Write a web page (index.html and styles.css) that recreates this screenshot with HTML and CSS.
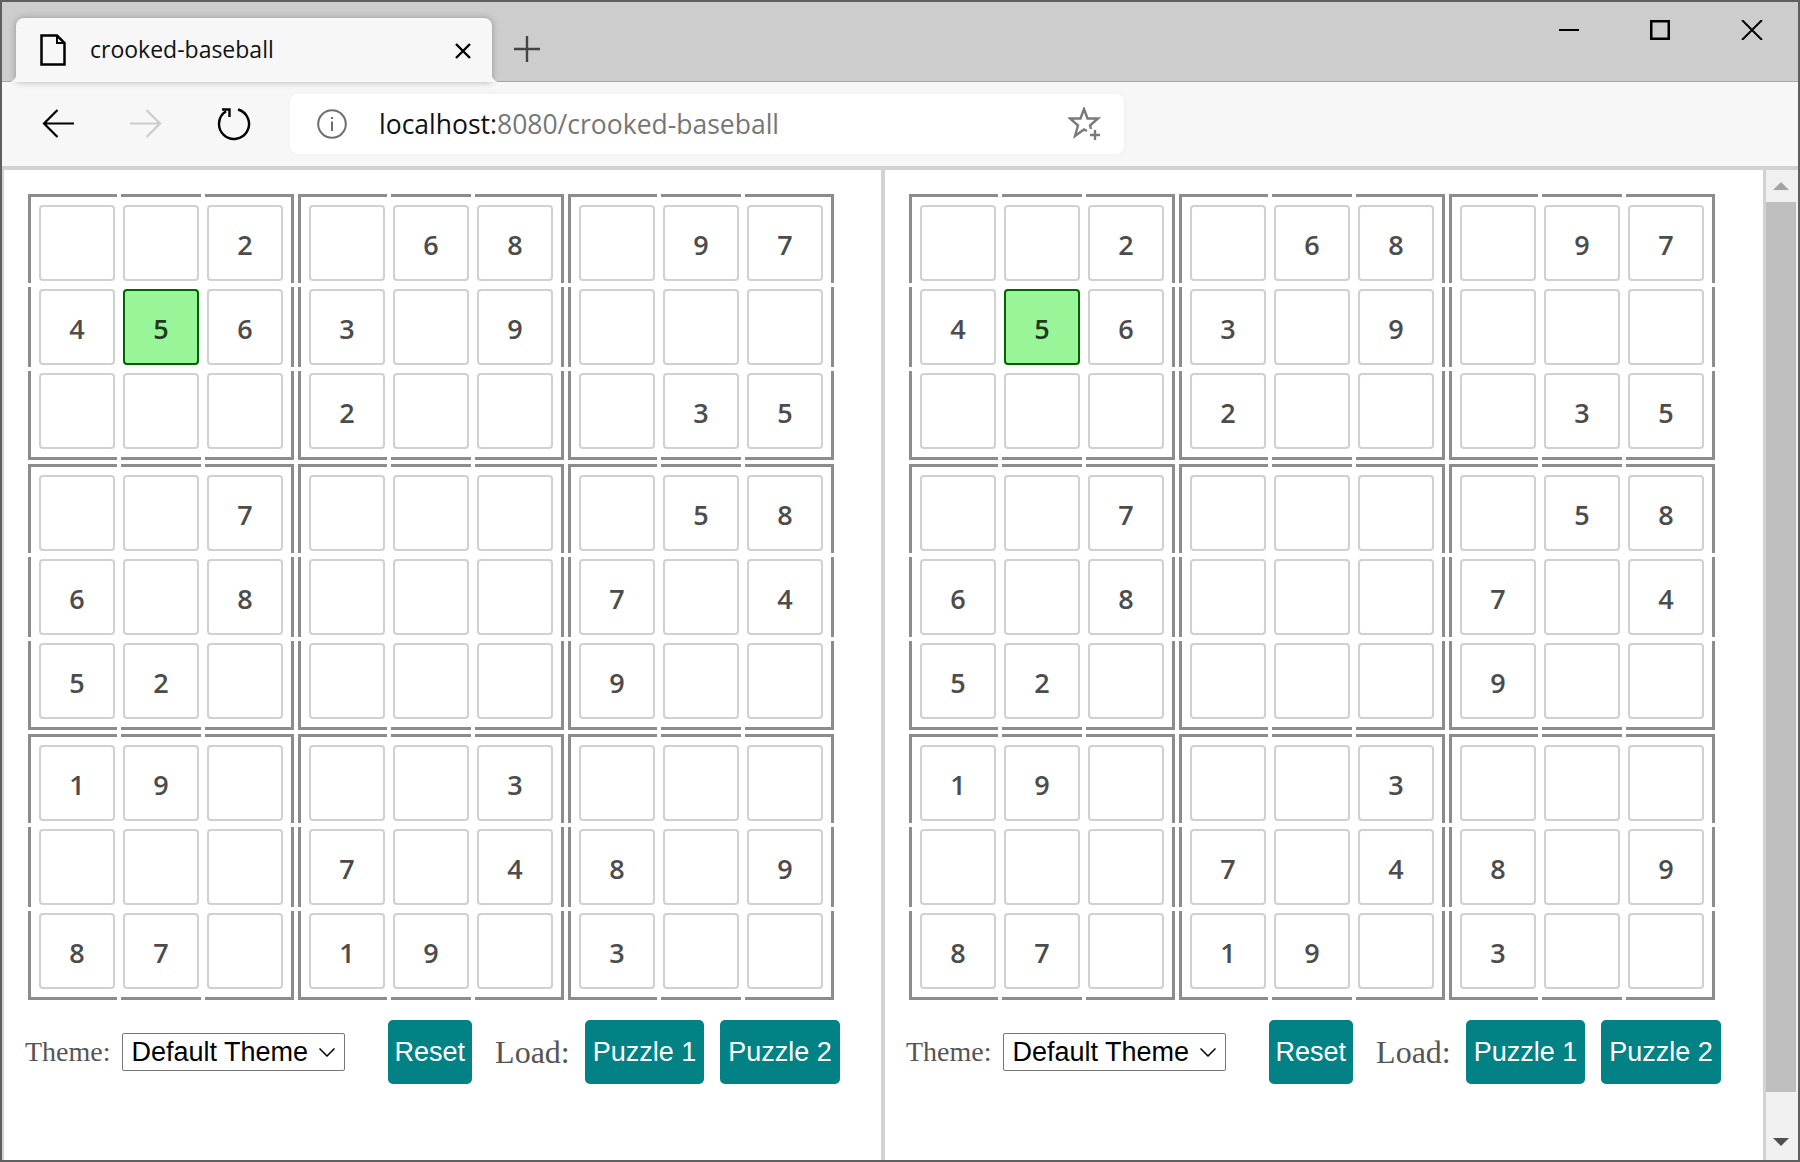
FILE: index.html
```html
<!DOCTYPE html>
<html lang="en">
<head>
  <meta charset="UTF-8">
  <title>crooked-baseball</title>
  <link rel="stylesheet" href="styles.css">
</head>
<body>
  <div class="window">
    <div class="tabstrip">
      <div class="tab">
        <svg class="doc-icon" width="26" height="32" viewBox="0 0 26 32" fill="none" stroke="#000" stroke-width="2.500">
          <path d="M1.5 1.5H17L24.5 9V30.5H1.5Z"/>
          <path d="M17 1.5V9H24.5" stroke-width="2"/>
        </svg>
        <span class="tab-title">crooked-baseball</span>
        <svg class="tab-close" width="16" height="16" viewBox="0 0 16 16" stroke="#000" stroke-width="2.4">
          <path d="M1 1L15 15M15 1L1 15"/>
        </svg>
      </div>
      <svg class="new-tab" width="26" height="26" viewBox="0 0 26 26" stroke="#444" stroke-width="2.4">
        <path d="M13 0V26M0 13H26"/>
      </svg>
      <div class="window-controls">
        <svg width="20" height="20" viewBox="0 0 20 20" stroke="#000" stroke-width="2"><path d="M0 10H20"/></svg>
        <svg width="20" height="20" viewBox="0 0 20 20" fill="none" stroke="#000" stroke-width="2.500"><path d="M1.250 1.250H18.750V18.750H1.250Z"/></svg>
        <svg width="22" height="20" viewBox="0 0 22 20" stroke="#000" stroke-width="2"><path d="M1 0L21 20M21 0L1 20"/></svg>
      </div>
    </div>

    <div class="toolbar">
      <svg class="nav-back" width="32" height="30" viewBox="0 0 32 30" fill="none" stroke="#000" stroke-width="2.2">
        <path d="M32 14.5H2M15.5 1L2 14.5L15.5 28"/>
      </svg>
      <svg class="nav-forward" width="32" height="30" viewBox="0 0 32 30" fill="none" stroke="#ccc" stroke-width="2.2">
        <path d="M0 14.5H30M16.500 1L30 14.5L16.500 28"/>
      </svg>
      <svg class="nav-reload" width="34" height="34" viewBox="0 0 34 34" fill="none" stroke="#000" stroke-width="2.4">
        <path d="M21 2.500A15 15 0 1 1 9 4.300"/>
        <path d="M5 2.500H12.500V10"/>
      </svg>
      <div class="urlbar">
        <svg class="info-icon" width="30" height="30" viewBox="0 0 30 30" fill="none" stroke="#6e6e6e" stroke-width="2">
          <circle cx="15" cy="15" r="13.800"/>
          <path d="M15 12.500V22M15 8V10"/>
        </svg>
        <span class="url"><span class="url-host">localhost:</span>8080/crooked-baseball</span>
        <svg class="star-icon" width="34" height="34" viewBox="0 0 34 34" fill="none" stroke="#7a7a7a" stroke-width="2.400">
          <path d="M23 22L22 18.500L30 11.500H19.500L16 2L12.500 11.500H2L10 18.500L7 29L16 22.500L19 24"/>
          <path d="M27 23V33M22 28H32"/>
        </svg>
      </div>
    </div>

    <div class="content">
      <div class="pane">
        <div class="board"></div>
        <div class="controls">
          <span class="theme-label">Theme:</span>
          <div class="select-wrap">
            <select class="theme-select"><option>Default Theme</option></select>
            <svg class="select-arrow" width="16" height="9" viewBox="0 0 16 9" fill="none" stroke="#000" stroke-width="1.500"><path d="M0.500 0.500L8 8L15.500 0.500"/></svg>
          </div>
          <button class="btn btn-reset">Reset</button>
          <span class="load-label">Load:</span>
          <button class="btn btn-puzzle">Puzzle 1</button>
          <button class="btn btn-puzzle btn-last">Puzzle 2</button>
        </div>
      </div>
      <div class="divider"></div>
      <div class="pane">
        <div class="board"></div>
        <div class="controls">
          <span class="theme-label">Theme:</span>
          <div class="select-wrap">
            <select class="theme-select"><option>Default Theme</option></select>
            <svg class="select-arrow" width="16" height="9" viewBox="0 0 16 9" fill="none" stroke="#000" stroke-width="1.500"><path d="M0.500 0.500L8 8L15.500 0.500"/></svg>
          </div>
          <button class="btn btn-reset">Reset</button>
          <span class="load-label">Load:</span>
          <button class="btn btn-puzzle">Puzzle 1</button>
          <button class="btn btn-puzzle btn-last">Puzzle 2</button>
        </div>
      </div>
      <div class="scrollbar">
        <div class="scroll-up"><span class="arrow-up"></span></div>
        <div class="scroll-thumb"></div>
        <div class="scroll-down"><span class="arrow-down"></span></div>
      </div>
    </div>
  </div>

  <script>
    // one string per row, dots are empty cells
    const puzzle = [
      "..2.68.97",
      "4563.9...",
      "...2...35",
      "..7....58",
      "6.8...7.4",
      "52....9..",
      "19...3...",
      "...7.48.9",
      "87.19.3.."
    ];

    document.querySelectorAll(".board").forEach(board => {
      for (let boxRow = 0; boxRow < 3; boxRow++) {
        for (let boxCol = 0; boxCol < 3; boxCol++) {
          const box = document.createElement("div");
          box.className = "box";
          for (let r = boxRow * 3; r < boxRow * 3 + 3; r++) {
            for (let c = boxCol * 3; c < boxCol * 3 + 3; c++) {
              const cell = document.createElement("div");
              cell.className = "cell";
              if (r === 1 && c === 1) cell.classList.add("active");
              if (puzzle[r][c] !== ".") cell.textContent = puzzle[r][c];
              box.appendChild(cell);
            }
          }
          board.appendChild(box);
        }
      }
    });
  </script>
</body>
</html>
```

FILE: styles.css
```css
* {
  box-sizing: border-box;
}

body {
  margin: 0;
  background-color: #5f5f5f;
}

svg {
  display: block;
  flex: none;
}

.window {
  width: 1800px;
  height: 1162px;
  border: 2px solid #5f5f5f;
  display: flex;
  flex-direction: column;
  overflow: hidden;
}

/* tab strip */
.tabstrip {
  height: 80px;
  flex: none;
  display: flex;
  background-color: #cdcdcd;
  border-bottom: 1px solid #a8a8a8;
  padding-left: 14px;
}

.tab {
  position: relative;
  width: 476px;
  height: 64px;
  margin-top: 16px;
  padding: 0 21px 0 24px;
  display: flex;
  align-items: center;
  background-color: #f7f7f7;
  border-radius: 8px 8px 0 0;
  box-shadow: 0 0 7px rgba(0, 0, 0, 0.28);
}

.tab::before,
.tab::after {
  content: "";
  position: absolute;
  bottom: 0;
  width: 8px;
  height: 8px;
}

.tab::before {
  left: -8px;
  background: radial-gradient(circle at 0 0, transparent 8px, #f7f7f7 8.500px);
}

.tab::after {
  right: -8px;
  background: radial-gradient(circle at 100% 0, transparent 8px, #f7f7f7 8.500px);
}

.tab-title {
  margin-left: 24px;
  margin-top: -2px;
  font-family: "Open Sans", sans-serif;
  font-size: 23px;
  color: #111;
}

.tab-close {
  margin-left: auto;
  margin-top: 2px;
}

.new-tab {
  margin: 34px 0 0 22px;
}

.window-controls {
  margin: 18px 35px 0 auto;
  display: flex;
  gap: 71px;
}

/* address bar */
.toolbar {
  height: 88px;
  flex: none;
  display: flex;
  align-items: center;
  padding-left: 40px;
  background-color: #f7f7f7;
  border-bottom: 4px solid #d2d2d2;
}

.nav-forward {
  margin-left: 56px;
}

.nav-reload {
  margin-left: 55px;
}

.urlbar {
  width: 834px;
  height: 60px;
  margin-left: 39px;
  padding: 0 22px 0 27px;
  display: flex;
  align-items: center;
  background-color: #fff;
  border-radius: 8px;
  box-shadow: 0 0 6px rgba(0, 0, 0, 0.04);
}

.url {
  margin-left: 32px;
  font-family: "Open Sans", sans-serif;
  font-size: 26.500px;
  color: #767676;
}

.url-host {
  color: #111;
}

.star-icon {
  margin-left: auto;
}

/* panes */
.content {
  flex: 1;
  display: flex;
  min-height: 0;
  background-color: #fff;
  border-left: 2px solid #d2d2d2;
}

.pane {
  width: 877px;
  padding: 24px 0 0 24px;
}

.pane:nth-child(3) {
  width: 878px;
}

.divider {
  width: 4px;
  background-color: #d2d2d2;
}

.board {
  display: grid;
  grid-template-columns: repeat(3, 266px);
  gap: 4px;
}

/* border of a box, broken where the cells meet */
.box {
  --line: #8c8c8c;
  --across: linear-gradient(to right, var(--line) 89px, transparent 89px, transparent 93px, var(--line) 93px, var(--line) 173px, transparent 173px, transparent 177px, var(--line) 177px);
  --down: linear-gradient(to bottom, var(--line) 89px, transparent 89px, transparent 93px, var(--line) 93px, var(--line) 173px, transparent 173px, transparent 177px, var(--line) 177px);
  height: 266px;
  padding: 11px;
  display: grid;
  grid-template-columns: repeat(3, 76px);
  grid-auto-rows: 76px;
  gap: 8px;
  background:
    var(--across) top / 100% 3px no-repeat,
    var(--across) bottom / 100% 3px no-repeat,
    var(--down) left / 3px 100% no-repeat,
    var(--down) right / 3px 100% no-repeat;
}

.cell {
  display: flex;
  align-items: center;
  justify-content: center;
  padding-top: 2px;
  border: 2px solid #d0d0d0;
  border-radius: 4px;
  font-family: "Open Sans", sans-serif;
  font-size: 27px;
  font-weight: 600;
  color: #4c4c4c;
}

.cell.active {
  background-color: #98f698;
  border-color: #006400;
  color: #1f3a1f;
}

/* theme and load row */
.controls {
  height: 64px;
  margin: 20px 0 0 -3px;
  display: flex;
  align-items: center;
}

.theme-label {
  font-family: "Liberation Serif", serif;
  font-size: 28px;
  color: #555;
}

.select-wrap {
  position: relative;
  margin-left: 11px;
}

.theme-select {
  display: block;
  width: 223px;
  height: 38px;
  padding: 0 0 0 9px;
  appearance: none;
  background-color: #fff;
  border: 1px solid #767676;
  border-radius: 2px;
  font-family: "Liberation Sans", sans-serif;
  font-size: 27px;
  color: #000;
}

.select-arrow {
  position: absolute;
  top: 15px;
  right: 10px;
  pointer-events: none;
}

.btn {
  height: 64px;
  padding: 0 7px;
  border: none;
  border-radius: 5px;
  background-color: #038286;
  font-family: "Liberation Sans", sans-serif;
  font-size: 27px;
  color: #fff;
}

.btn-puzzle {
  padding: 0 8px;
}

.btn-reset {
  margin-left: 43px;
}

.btn-last {
  margin-left: 16px;
}

.load-label {
  margin: 0 15px 0 23px;
  font-family: "Liberation Serif", serif;
  font-size: 32px;
  color: #555;
}

/* scrollbar */
.scrollbar {
  width: 35px;
  flex: none;
  display: flex;
  flex-direction: column;
  background-color: #f0f0f0;
  border-left: 3px solid #d2d2d2;
}

.scroll-up {
  height: 32px;
  display: flex;
  justify-content: center;
  padding: 12px 2px 0 0;
}

.scroll-thumb {
  height: 890px;
  margin: 0 2px 0 0;
  background-color: #bebebe;
}

.scroll-down {
  flex: 1;
  display: flex;
  justify-content: center;
  padding: 46px 2px 0 0;
}

.arrow-up,
.arrow-down {
  width: 0;
  height: 0;
  border-left: 8px solid transparent;
  border-right: 8px solid transparent;
}

.arrow-up {
  border-bottom: 8px solid #a3a3a3;
}

.arrow-down {
  border-top: 8px solid #505050;
}
```
